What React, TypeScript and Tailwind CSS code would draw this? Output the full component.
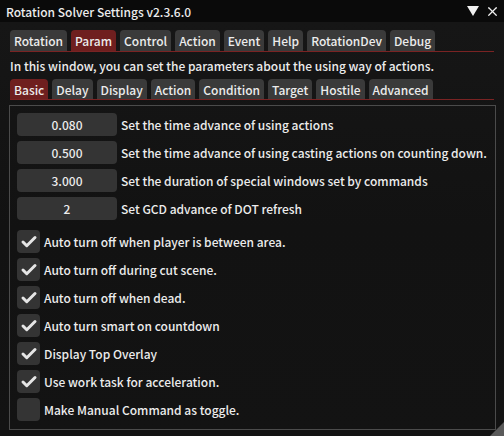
import { Check, X } from "lucide-react";

const mainTabs = ["Rotation", "Param", "Control", "Action", "Event", "Help", "RotationDev", "Debug"];
const subTabs = ["Basic", "Delay", "Display", "Action", "Condition", "Target", "Hostile", "Advanced"];

const numbers = [
  { value: "0.080", label: "Set the time advance of using actions" },
  { value: "0.500", label: "Set the time advance of using casting actions on counting down." },
  { value: "3.000", label: "Set the duration of special windows set by commands" },
  { value: "2", label: "Set GCD advance of DOT refresh" },
];

const checks = [
  { on: true, label: "Auto turn off when player is between area." },
  { on: true, label: "Auto turn off during cut scene." },
  { on: true, label: "Auto turn off when dead." },
  { on: true, label: "Auto turn smart on countdown" },
  { on: true, label: "Display Top Overlay" },
  { on: true, label: "Use work task for acceleration." },
  { on: false, label: "Make Manual Command as toggle." },
];

function TabBar({ tabs, active, h }: { tabs: string[]; active: string; h: string }) {
  return (
    <div className="border-b border-[#7a2323]">
      <div className="flex gap-[4px]">
        {tabs.map((t) => (
          <div
            key={t}
            className={`${h} flex items-center px-[4px] rounded-t-[4px] ${
              t === active ? "bg-[#6f1f1f]" : "bg-[#3a3a3a]"
            }`}
          >
            {t}
          </div>
        ))}
      </div>
    </div>
  );
}

export default function App() {
  return (
    <div
      className="w-[504px] h-[436px] bg-[#121212] text-[#ececec] text-[12px] font-medium leading-[17px] whitespace-nowrap flex flex-col overflow-hidden relative"
      style={{ fontFamily: '"Noto Sans CJK JP", "Noto Sans", sans-serif' }}
    >
      <div className="h-[22px] bg-[#0a0a0a] flex items-center pl-[6px] pr-[4px]">
        <span className="flex-1">Rotation Solver Settings v2.3.6.0</span>
        <svg width="12" height="10" viewBox="0 0 12 10" className="mr-[6px]">
          <polygon points="0,0 12,0 6,10" fill="#f0f0f0" />
        </svg>
        <X size={15} strokeWidth={2} className="text-[#f0f0f0]" />
      </div>

      <div className="flex-1 px-[10px] pt-[8px] flex flex-col bg-gradient-to-b from-[#161616] via-[#121212] to-[#131313]">
        <TabBar tabs={mainTabs} active="Param" h="h-[21px]" />
        <div className="h-[27px] flex items-center">
          In this window, you can set the parameters about the using way of actions.
        </div>
        <TabBar tabs={subTabs} active="Basic" h="h-[20px]" />

        <div className="mt-[5px] ml-[-1px] w-[487px] h-[325px] border border-[#4b4b4b] px-[7px] pt-[7px] flex flex-col">
          <div className="flex flex-col gap-[5px]">
            {numbers.map((n) => (
              <div key={n.label} className="flex items-center gap-[4px]">
                <div className="w-[100px] h-[23px] shrink-0 rounded-[4px] bg-[#343434] flex items-center justify-center">
                  {n.value}
                </div>
                <span>{n.label}</span>
              </div>
            ))}
          </div>
          <div className="flex flex-col gap-[5px] mt-[10px]">
            {checks.map((c) => (
              <div key={c.label} className="flex items-center gap-[4px]">
                <div className="w-[23px] h-[23px] shrink-0 rounded-[4px] bg-[#343434] flex items-center justify-center">
                  {c.on && <Check size={18} strokeWidth={4} className="text-[#e6e6e6]" />}
                </div>
                <span>{c.label}</span>
              </div>
            ))}
          </div>
        </div>
      </div>

      <div className="absolute right-0 bottom-0 w-0 h-0 border-l-[14px] border-l-transparent border-b-[14px] border-b-[#5a5a5a]" />
    </div>
  );
}
